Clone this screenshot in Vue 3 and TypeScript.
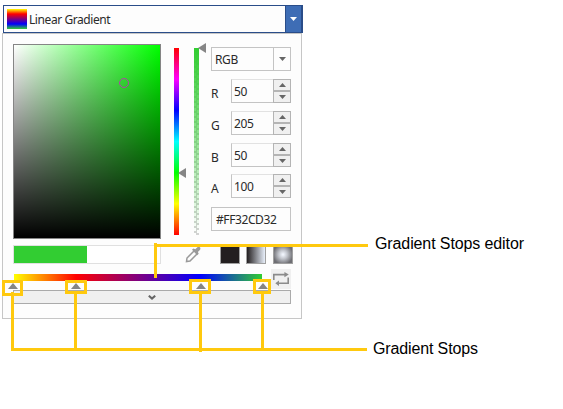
<script setup lang="ts">
import { ref } from 'vue'

interface Channel { name: string; value: number }
interface Box { x: number; y: number; w: number; h: number }

const channels = ref<Channel[]>([
  { name: 'R', value: 50 },
  { name: 'G', value: 205 },
  { name: 'B', value: 50 },
  { name: 'A', value: 100 },
])
const hex = ref('#FF32CD32')
const stops: number[] = [-1, 62, 187, 249]
const boxes: Box[] = [
  { x: 3.5, y: 281.5, w: 18, h: 13 },
  { x: 66.5, y: 281.5, w: 19, h: 11 },
  { x: 190.5, y: 280.5, w: 19, h: 12 },
  { x: 254.5, y: 280.5, w: 15, h: 12 },
]
</script>

<template>
  <main class="page">
    <div class="picker">
      <header class="combo">
        <span class="swatch"></span>
        <span class="combo-text">Linear Gradient</span>
        <span class="combo-btn">
          <svg width="7" height="4" viewBox="0 0 7 4"><path d="M0 0h7L3.5 4z" fill="#fff" /></svg>
        </span>
      </header>

      <section class="panel">
        <div class="editor">
          <div class="spectrum"><i class="ring"></i></div>
          <div class="strip hue">
            <svg class="thumb hue-thumb" width="8" height="10" viewBox="0 0 8 10"><path d="M0 5L8 0v10z" fill="#868686" /></svg>
          </div>
          <div class="strip alpha">
            <svg class="thumb alpha-thumb" width="8" height="10" viewBox="0 0 8 10"><path d="M0 5L8 0v10z" fill="#868686" /></svg>
          </div>
          <div class="fields">
            <div class="box mode">
              <span class="val">RGB</span>
              <span class="drop"><svg width="7" height="4" viewBox="0 0 7 4"><path d="M0 0h7L3.5 4z" fill="#666" /></svg></span>
            </div>
            <label v-for="c in channels" :key="c.name" class="row">
              <span class="name">{{ c.name }}</span>
              <span class="box num">
                <span class="val">{{ c.value }}</span>
                <span class="spin">
                  <b><svg width="7" height="4" viewBox="0 0 7 4"><path d="M0 4h7L3.5 0z" fill="#666" /></svg></b>
                  <b><svg width="7" height="4" viewBox="0 0 7 4"><path d="M0 0h7L3.5 4z" fill="#666" /></svg></b>
                </span>
              </span>
            </label>
            <div class="box hex"><span class="val">{{ hex }}</span></div>
          </div>
        </div>

        <div class="tools">
          <div class="preview"><span class="current"></span></div>
          <svg class="dropper" width="17" height="17" viewBox="0 0 17 17">
            <path d="M9 5L2 12L1.5 15.5L5 15L12 8" fill="#fdfdfd" stroke="#9a9a9a" stroke-width="1.5" />
            <path d="M7 3.8l1.4-1.3 1.9.8L12.4 1.3c1.8-1.4 3.8.4 2.7 2.4l-2.2 2.4.8 1.7-1.5 1.5z" fill="#9a9a9a" />
          </svg>
          <span class="brush solid"></span>
          <span class="brush linear"></span>
          <span class="brush radial"></span>
        </div>

        <div class="stops-row">
          <div class="ramp">
            <svg v-for="s in stops" :key="s" class="stop" :style="{ left: s + 'px' }" width="10" height="6" viewBox="0 0 10 6">
              <path d="M0 6h10L5 0z" fill="#858585" />
            </svg>
          </div>
          <span class="reverse">
            <svg width="20" height="20" viewBox="0 0 20 20">
              <path d="M2.8 11V5.6H14.5M17.2 8.5v5.8H7" fill="none" stroke="#8b8b8b" stroke-width="1.6" />
              <path d="M13.4 2.9L17.8 5.6L13.4 8.3zM8 11.6L4.3 14.3L8 17z" fill="#8b8b8b" />
            </svg>
          </span>
        </div>

        <div class="expander">
          <svg width="8" height="5" viewBox="0 0 8 5"><path d="M.8.7L4 3.6L7.2.7" fill="none" stroke="#666" stroke-width="2" /></svg>
        </div>
      </section>
    </div>

    <svg class="notes" width="563" height="409" viewBox="0 0 563 409">
      <g fill="none" stroke="#ffc90e" stroke-width="3">
        <rect v-for="b in boxes" :key="b.x" :x="b.x" :y="b.y" :width="b.w" :height="b.h" />
        <path d="M155.5 243V278M155 245.5H368" />
        <path d="M12.5 292V351M75.5 293V351M200.5 293V352M262.5 293V351M11 349.5H367" />
      </g>
      <g class="note-text">
        <text x="375" y="249" textLength="149">Gradient Stops editor</text>
        <text x="373" y="354" textLength="105">Gradient Stops</text>
      </g>
    </svg>
  </main>
</template>

<style>
body {
  background: #fff;
}
</style>

<style scoped>
* {
  box-sizing: border-box;
}
svg {
  display: block;
}
.page {
  position: relative;
  width: 563px;
  height: 409px;
  padding: 5px 0 0 2px;
  overflow: hidden;
  font: 12px/16px 'Noto Sans', 'Open Sans', sans-serif;
  color: #2a2a2a;
}
.picker {
  width: 301px;
}
.combo {
  display: flex;
  align-items: center;
  width: 300px;
  height: 28px;
  margin-left: 1px;
  border: 1px solid #2a4d89;
  background: #fdfdfd;
}
.swatch {
  width: 20px;
  height: 20px;
  margin: 0 2px 0 3px;
  background: linear-gradient(#ff0 0%, #f00 25%, #00f 75%, #32cd32 100%);
}
.combo-text {
  flex: 1;
  padding-top: 2px;
  letter-spacing: -0.42px;
  white-space: nowrap;
}
.combo-btn {
  display: flex;
  align-items: center;
  justify-content: center;
  width: 17px;
  height: 26px;
  border-left: 1px solid #2a4d89;
  border-right: 1px solid #2a4d89;
  background: #3e6db5;
}
.panel {
  width: 300px;
  height: 286px;
  padding: 10px;
  border: 1px solid #c6c6c6;
  background: #fdfdfd;
}
.editor {
  display: flex;
  align-items: flex-start;
  height: 195px;
}
.spectrum {
  position: relative;
  width: 148px;
  height: 195px;
  border: 1px solid #858585;
  background: linear-gradient(transparent, #000), linear-gradient(90deg, #fff, #0f0);
}
.ring {
  position: absolute;
  left: 105px;
  top: 33px;
  width: 10px;
  height: 10px;
  border: 1px solid #b044a8;
  border-radius: 50%;
}
.strip {
  position: relative;
  width: 5px;
  height: 187px;
  margin-top: 4px;
}
.hue {
  margin-left: 13px;
  background: linear-gradient(#f00, #f0f 16.67%, #00f 33.33%, #0ff 50%, #0f0 66.67%, #ff0 83.33%, #f00);
}
.alpha {
  margin-left: 15px;
  background: linear-gradient(#32cd32, rgba(50, 205, 50, 0)), repeating-conic-gradient(#d3d3d3 0 25%, #fff 0 50%) 0 0 / 5px 5px;
}
.thumb {
  position: absolute;
}
.hue-thumb {
  left: 4px;
  top: 120px;
}
.alpha-thumb {
  left: 4px;
  top: -5px;
}
.fields {
  width: 80px;
  margin: 3px 0 0 12px;
}
.box {
  display: flex;
  align-items: center;
  height: 24px;
  border: 1px solid #c4c4c4;
  background: #fdfdfd;
}
.val {
  flex: 1;
  padding: 2px 0 0 3px;
  letter-spacing: -0.4px;
}
.drop {
  display: flex;
  align-items: center;
  justify-content: center;
  width: 17px;
  height: 22px;
  border-left: 1px solid #c4c4c4;
}
.mode {
  margin-bottom: 8px;
}
.row {
  display: flex;
  align-items: center;
  height: 24px;
  margin-bottom: 7.8px;
}
.name {
  width: 20px;
  padding-top: 6px;
}
.num {
  width: 60px;
  border-top-color: #e2e2e2;
}
.num .val {
  padding-left: 2px;
}
.spin {
  width: 18px;
  height: 24px;
  margin-right: -1px;
}
.spin b {
  display: flex;
  align-items: center;
  justify-content: center;
  height: 12px;
  border: 1px solid #b4b4b4;
  background: #f0f0f0;
}
.hex {
  margin-top: 8.6px;
}
.hex .val {
  padding-left: 4px;
}
.tools {
  display: flex;
  align-items: flex-start;
  height: 20px;
  margin-top: 6px;
}
.preview {
  flex: none;
  width: 148px;
  height: 19px;
  border: 1px solid #e0e0e0;
  background: #fff;
}
.current {
  display: block;
  width: 73px;
  height: 17px;
  background: #32cd32;
}
.dropper {
  flex: none;
  margin: 1px 18px 0 24px;
}
.brush {
  flex: none;
  width: 20px;
  height: 19px;
  margin-left: 6px;
  border: 1px solid #a0a0a0;
}
.solid {
  margin-left: 0;
  background: #231f20;
}
.linear {
  background: linear-gradient(90deg, #231f20, #e8effa);
}
.radial {
  margin-left: 7px;
  background: radial-gradient(circle, #eff3fb 5%, #c2c5cc 35%, #6e6e73 80%);
}
.stops-row {
  display: flex;
  height: 25px;
  padding-top: 4px;
}
.ramp {
  position: relative;
  width: 248px;
  height: 7px;
  margin: 5px 9px 0 1px;
  background: linear-gradient(90deg, #ff0, #f00 25%, #00f 75%, #32cd32);
}
.stop {
  position: absolute;
  top: 9px;
  margin-left: -5px;
}
.reverse {
  width: 20px;
  height: 20px;
  background: #f0f0f0;
}
.expander {
  display: flex;
  align-items: center;
  justify-content: center;
  width: 278px;
  height: 14px;
  border: 1px solid #aaa;
  background: #f0f0f0;
}
.notes {
  position: absolute;
  left: 0;
  top: 0;
}
.note-text {
  font: 16px 'Liberation Sans', Arial, sans-serif;
  fill: #000;
}
</style>
